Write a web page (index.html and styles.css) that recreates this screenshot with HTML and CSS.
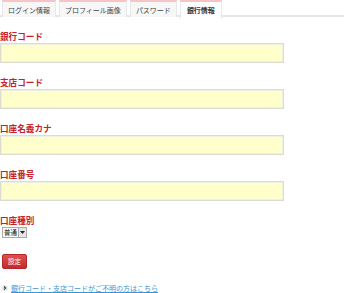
FILE: index.html
```html
<!DOCTYPE html>
<html lang="ja">
<head>
<meta charset="utf-8">
<link rel="stylesheet" href="styles.css">
</head>
<body>
<div class="page">
  <ul class="tabs">
    <li class="tab">ログイン情報</li>
    <li class="tab">プロフィール画像</li>
    <li class="tab">パスワード</li>
    <li class="tab active">銀行情報</li>
  </ul>
  <form class="form">
    <div class="field">
      <label class="label">銀行コード</label>
      <input class="input" type="text">
    </div>
    <div class="field">
      <label class="label">支店コード</label>
      <input class="input" type="text">
    </div>
    <div class="field">
      <label class="label">口座名義カナ</label>
      <input class="input" type="text">
    </div>
    <div class="field">
      <label class="label">口座番号</label>
      <input class="input" type="text">
    </div>
    <div class="field last">
      <label class="label">口座種別</label>
      <div class="select">
        <span class="select-value">普通</span>
        <span class="select-arrow"><svg width="5" height="3" viewBox="0 0 5 3"><path d="M0 0h5L2.5 3z" fill="#222"/></svg></span>
      </div>
    </div>
    <button class="button" type="button">設定</button>
    <p class="help">
      <span class="help-icon"><svg width="6" height="6" viewBox="0 0 6 6"><circle cx="3" cy="3" r="3" fill="#e8e8e8"/><path d="M2 1.5L3.6 3L2 4.5" stroke="#333" stroke-width="1.1" fill="none"/></svg></span>
      <a class="help-link" href="#">銀行コード・支店コードがご不明の方はこちら</a>
    </p>
  </form>
</div>
</body>
</html>
```
FILE: styles.css
```css
* { box-sizing: border-box; }
html, body { margin: 0; padding: 0; background: #fff; }
body {
  font-family: "Noto Sans CJK JP", "Noto Sans", sans-serif;
  color: #333;
}
.page { width: 344px; }
.tabs {
  list-style: none;
  margin: 0;
  padding: 0 0 0 2px;
  display: flex;
  gap: 3px;
  height: 17px;
  border-bottom: 2px solid #e6e6e6;
}
.tab {
  height: 17px;
  padding: 2px 5px 0;
  font-size: 7px;
  line-height: 12px;
  color: #444;
  background: #f7f7f7;
  border-top: 2px solid #f6c4c4;
  border-left: 1px solid #e8e8e8;
  border-right: 1px solid #e8e8e8;
  white-space: nowrap;
}
.tab.active {
  height: 19px;
  background: #fff;
  font-weight: bold;
  color: #333;
  padding: 2px 6px 0;
}
.form { padding: 14px 0 0 0; }
.field { display: flex; flex-direction: column; margin-bottom: 14px; }
.field.last { margin-bottom: 16px; }
.label {
  display: block;
  font-size: 8.6px;
  line-height: 11px;
  font-weight: bold;
  color: #c4222a;
  margin-bottom: 1px;
}
.input {
  display: block;
  width: 284px;
  height: 20px;
  margin: 0;
  padding: 0 4px;
  background: #ffffcc;
  border: 1px solid #dcdcd4;
  box-shadow: inset 0 0 0 1px #f0f0e0;
  font: inherit;
  outline: none;
}
.select {
  display: flex;
  align-items: stretch;
  margin-left: 2px;
  width: 25px;
  height: 11px;
  border: 1px solid #a9a9a9;
  background: #fff;
}
.select-value {
  flex: 1;
  font-size: 6.5px;
  line-height: 9px;
  padding-left: 1px;
  color: #111;
}
.select-arrow {
  width: 8px;
  display: flex;
  align-items: center;
  justify-content: center;
  background: #e6e6e6;
  border-left: 1px solid #a9a9a9;
}
.button {
  display: block;
  margin: 0 0 0 2px;
  width: 25px;
  height: 15px;
  padding: 0;
  border: 1px solid #b52727;
  border-radius: 2px;
  background: linear-gradient(#e05050, #c42a2a);
  color: #fff;
  font-family: inherit;
  font-size: 6.5px;
  line-height: 13px;
}
.help {
  margin: 14px 0 0 0;
  display: flex;
  align-items: center;
  gap: 3px;
  padding-left: 2px;
  font-size: 7px;
  line-height: 10px;
}
.help-icon { display: flex; }
.help-link {
  color: #3797d6;
  text-decoration: underline;
}
```
